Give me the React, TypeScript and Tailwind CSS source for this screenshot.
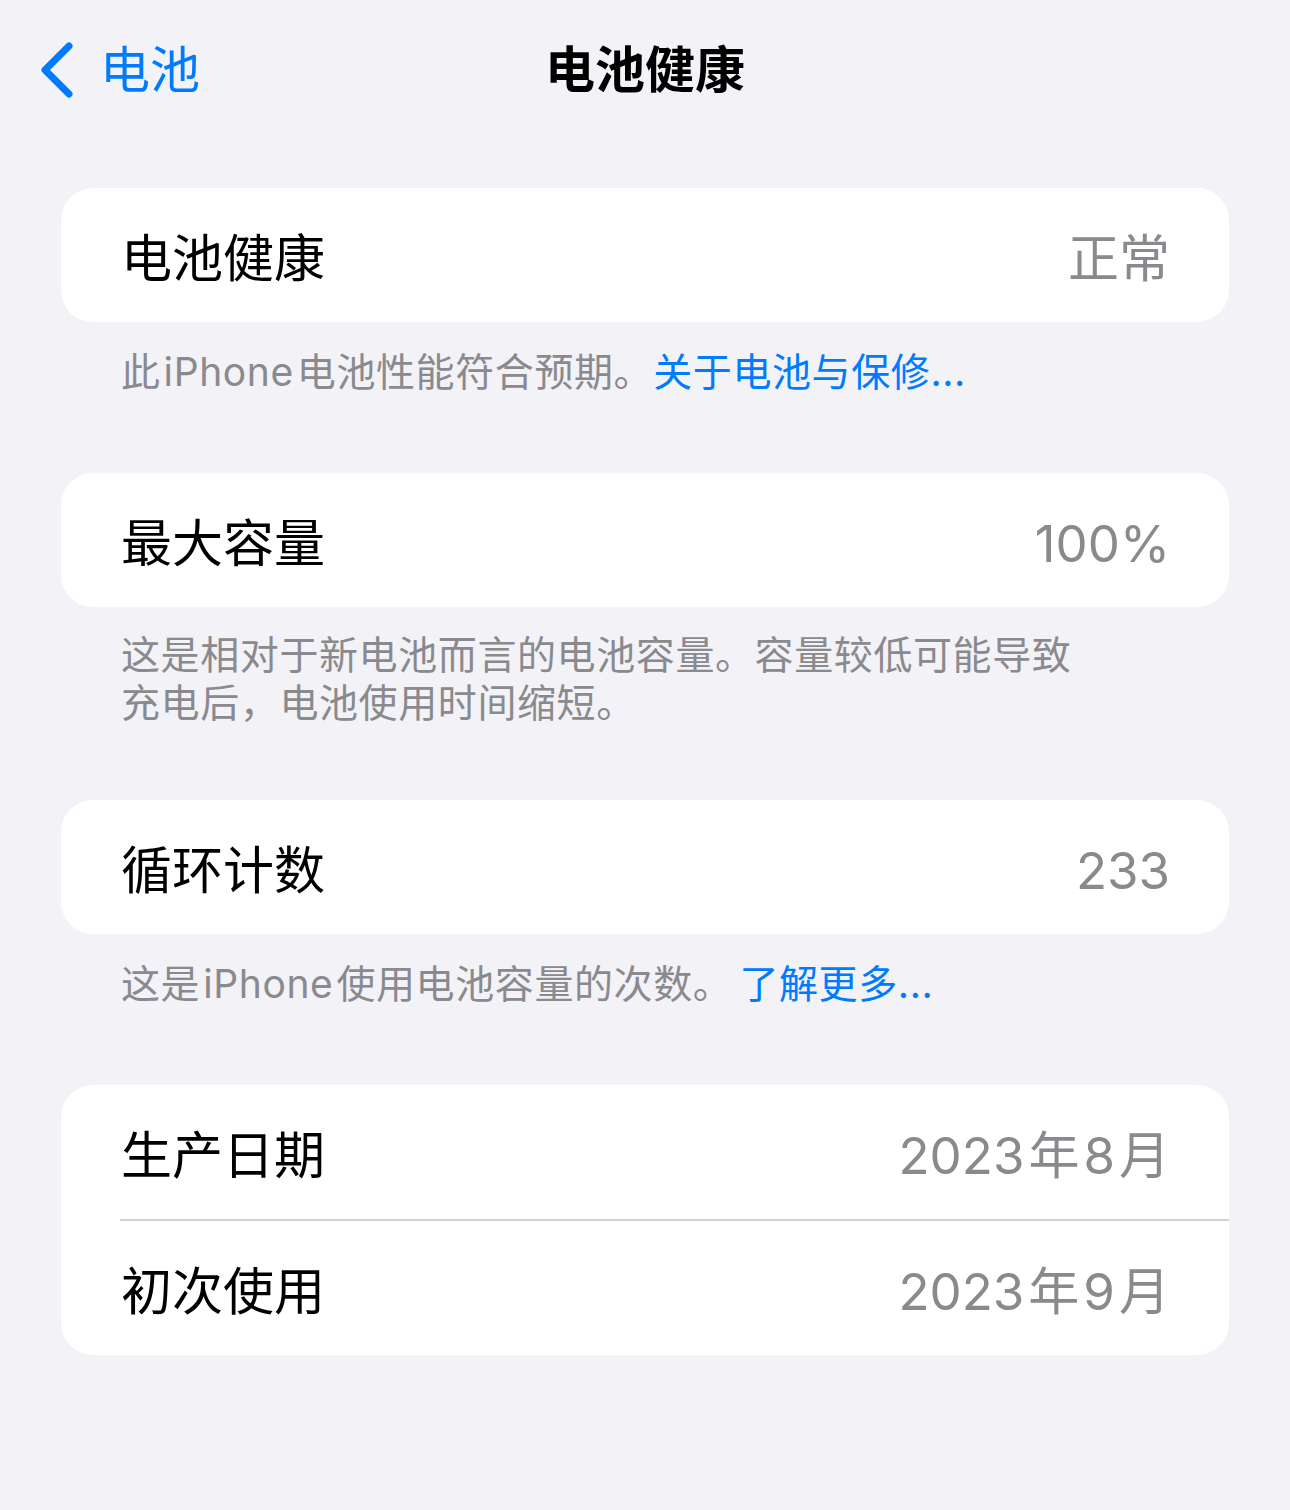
import React from 'react'

const font = {
  fontFamily: '"Inter", "Noto Sans CJK SC", sans-serif',
}

function Row({ label, value }: { label: string; value: React.ReactNode }) {
  return (
    <div className="flex h-[134px] items-center justify-between pl-[60px] pr-[59px] pt-[6px]">
      <span className="text-[51px] leading-none text-black">{label}</span>
      <span className="flex items-baseline text-[51px] leading-none text-[#8a8a8e]">{value}</span>
    </div>
  )
}

function DateValue({ year, month }: { year: string; month: string }) {
  return (
    <>
      <span>{year}</span>
      <span className="ml-[4px]">年</span>
      <span className="ml-[4px]">{month}</span>
      <span className="ml-[4px]">月</span>
    </>
  )
}

function Card({ children }: { children: React.ReactNode }) {
  return (
    <div className="mx-[61px] overflow-hidden rounded-[32px] bg-white">
      {children}
    </div>
  )
}

function Footer({ children, className }: { children: React.ReactNode; className?: string }) {
  return (
    <div
      className={`px-[121px] text-[39px] leading-[48px] tracking-[0.6px] text-[#8a8a8e] ${className ?? ''}`}
    >
      {children}
    </div>
  )
}

export default function App() {
  return (
    <div className="min-h-[1510px] w-full bg-[#f2f2f7]" style={font}>
      {/* Nav bar */}
      <div className="grid h-[140px] grid-cols-[1fr_auto_1fr] items-center">
        <div className="flex items-center pl-[38px]">
          <svg width="36" height="58" viewBox="0 0 36 58" fill="none">
            <path
              d="M31 5 L7 29 L31 53"
              stroke="#007aff"
              strokeWidth="7"
              strokeLinecap="round"
              strokeLinejoin="round"
            />
          </svg>
          <span className="ml-[26px] text-[50px] leading-none text-[#007aff]">电池</span>
        </div>
        <div className="text-[50px] font-semibold leading-none text-black">电池健康</div>
        <div />
      </div>

      <div className="mt-[48px]">
        <Card>
          <Row label="电池健康" value="正常" />
        </Card>
        <Footer className="mt-[26px]">
          此<span className="ml-[3px]">iPhone</span>
          <span className="ml-[3px]">电池性能符合预期。</span>
          <span className="text-[#007aff]">关于电池与保修...</span>
        </Footer>
      </div>

      <div className="mt-[77px]">
        <Card>
          <Row label="最大容量" value="100%" />
        </Card>
        <Footer className="mt-[24px]">
          这是相对于新电池而言的电池容量。容量较低可能导致
          <br />
          充电后，电池使用时间缩短。
        </Footer>
      </div>

      <div className="mt-[73px]">
        <Card>
          <Row label="循环计数" value="233" />
        </Card>
        <Footer className="mt-[26px]">
          这是<span className="ml-[3px]">iPhone</span>
          <span className="ml-[3px]">使用电池容量的次数。</span>
          <span className="ml-[7px] text-[#007aff]">了解更多...</span>
        </Footer>
      </div>

      <div className="mt-[77px]">
        <Card>
          <Row label="生产日期" value={<DateValue year="2023" month="8" />} />
          <div className="ml-[59px] h-[2px] bg-[#d1d1d6]" />
          <Row label="初次使用" value={<DateValue year="2023" month="9" />} />
        </Card>
      </div>
    </div>
  )
}
